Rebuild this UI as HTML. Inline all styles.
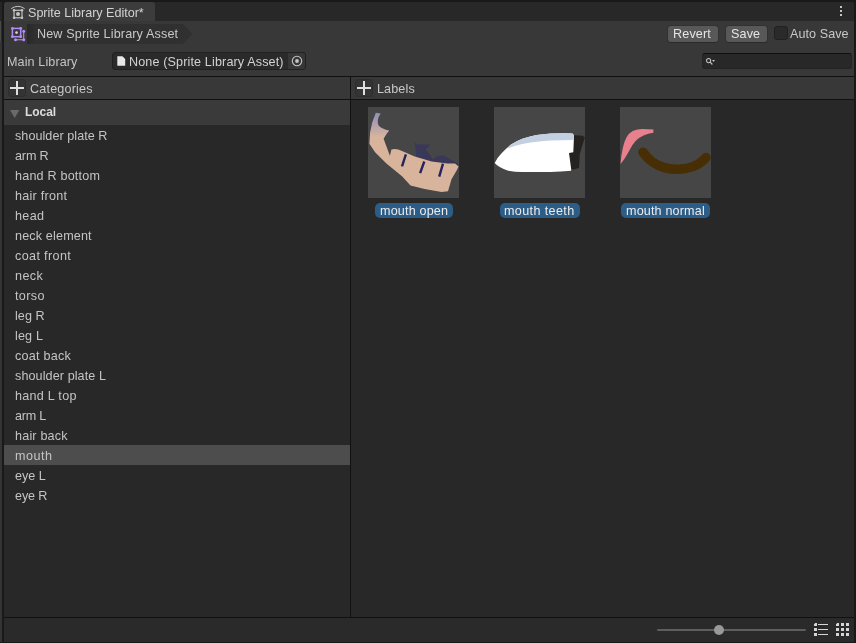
<!DOCTYPE html>
<html>
<head>
<meta charset="utf-8">
<title>Sprite Library Editor</title>
<style>
html,body{margin:0;padding:0;}
body{width:856px;height:643px;overflow:hidden;background:#191919;position:relative;
  font-family:"Liberation Sans",sans-serif;font-size:12.6px;color:#c8c8c8;}
.abs{position:absolute;}
.t{position:absolute;white-space:nowrap;line-height:14px;will-change:transform;}
.hline{position:absolute;height:1px;background:#111;}
.vline{position:absolute;width:1px;background:#111;}
.btn{position:absolute;background:#585858;border:1px solid #313131;border-bottom-color:#2a2a2a;border-radius:4px;box-sizing:border-box;}
.thumb{position:absolute;width:91px;height:91px;background:#464646;top:107px;overflow:hidden;}
.thumb svg{filter:blur(0.45px);display:block;}
.pill{position:absolute;height:15px;top:203px;background:#2c5d87;border-radius:5px;}
</style>
</head>
<body>
<!-- window -->
<div class="abs" style="left:0;top:2px;width:2px;height:19px;background:#262626;"></div>
<div class="abs" style="left:0;top:41px;width:2px;height:601px;background:#343434;"></div>
<div class="abs" style="left:0;top:21px;width:1px;height:20px;background:#484848;"></div>
<div class="abs" style="left:1px;top:21px;width:1px;height:20px;background:#2a2a2a;"></div>
<div class="abs" style="left:4px;top:2px;width:850px;height:640px;background:#383838;border-radius:3px 3px 0 0;"></div>
<div class="abs" style="left:4px;top:2px;width:850px;height:19px;background:#282828;border-radius:3px 3px 0 0;"></div>
<div class="abs" style="left:4px;top:2px;width:151px;height:19px;background:#3c3c3c;border-radius:3px 3px 0 0;"></div>
<!-- tab icon -->
<svg class="abs" style="left:10px;top:4px" width="16" height="16" viewBox="0 0 16 16">
  <path d="M1.2 4.6 Q7.9 0.1 14.6 4.6" fill="none" stroke="#c4c4c4" stroke-width="1"/>
  <rect x="4.05" y="6.3" width="7.95" height="7.5" fill="none" stroke="#c4c4c4" stroke-width="1.15"/>
  <circle cx="4.05" cy="6.3" r="1.25" fill="#c4c4c4"/><circle cx="12" cy="6.3" r="1.25" fill="#c4c4c4"/>
  <circle cx="4.05" cy="13.8" r="1.25" fill="#c4c4c4"/><circle cx="12" cy="13.8" r="1.25" fill="#c4c4c4"/>
  <circle cx="8.02" cy="10.05" r="2" fill="#c4c4c4"/>
</svg>
<div class="t" id="tabt" style="left:28.00px;top:6px;letter-spacing:-0.020px;color:#d2d2d2;">Sprite Library Editor*</div>
<!-- kebab -->
<div class="abs" style="left:840px;top:6px;width:2px;height:2px;background:#c4c4c4;box-shadow:0 4px 0 #c4c4c4,0 8px 0 #c4c4c4;"></div>

<!-- toolbar row 1 -->
<svg class="abs" style="left:10px;top:26px" width="16" height="16" viewBox="0 0 16 16">
  <rect x="2.4" y="2.4" width="8.3" height="8.3" fill="none" stroke="#b08cf2" stroke-width="1.5"/>
  <path d="M13.7 5.2 V13.7 H5.5" fill="none" stroke="#b08cf2" stroke-width="1.1"/>
  <circle cx="2.4" cy="2.4" r="1.4" fill="#b08cf2"/><circle cx="10.7" cy="2.4" r="1.4" fill="#b08cf2"/>
  <circle cx="2.4" cy="10.7" r="1.4" fill="#b08cf2"/><circle cx="10.7" cy="10.7" r="1.4" fill="#b08cf2"/>
  <circle cx="13.7" cy="5.2" r="1.5" fill="#b08cf2"/><circle cx="13.7" cy="13.7" r="1.5" fill="#b08cf2"/><circle cx="5.5" cy="13.7" r="1.5" fill="#b08cf2"/>
  <circle cx="6.55" cy="6.55" r="1.35" fill="#d4d4d4"/>
</svg>
<svg class="abs" style="left:27px;top:24px" width="166" height="20" viewBox="0 0 166 20">
  <defs><linearGradient id="bg" x1="0" x2="1" y1="0" y2="0"><stop offset="0" stop-color="#282828"/><stop offset="0.05" stop-color="#303030"/><stop offset="1" stop-color="#303030"/></linearGradient></defs>
  <path d="M0 0 H156 L165.5 10 L156 20 H0 Z" fill="url(#bg)"/>
</svg>
<div class="t" id="crumb" style="left:37.00px;top:27px;letter-spacing:0.137px;color:#c8c8c8;">New Sprite Library Asset</div>

<div class="btn" style="left:667px;top:25px;width:52px;height:18px;"></div>
<div class="t" id="revert" style="left:673.00px;top:27px;letter-spacing:0.155px;color:#e4e4e4;">Revert</div>
<div class="btn" style="left:725px;top:25px;width:43px;height:18px;"></div>
<div class="t" id="save" style="left:731.00px;top:27px;letter-spacing:0.121px;color:#e4e4e4;">Save</div>
<div class="abs" style="left:774px;top:26px;width:14px;height:14px;background:#2a2a2a;border:1px solid #212121;border-radius:3px;box-sizing:border-box;"></div>
<div class="t" id="autosave" style="left:790.00px;top:27px;letter-spacing:0.055px;color:#c8c8c8;">Auto Save</div>

<!-- row 2 -->
<div class="t" id="mainlib" style="left:7.00px;top:55px;letter-spacing:0.101px;color:#c4c4c4;">Main Library</div>
<div class="abs" style="left:112px;top:52px;width:194px;height:18px;background:#2a2a2a;border:1px solid #212121;border-radius:3px;box-sizing:border-box;"></div>
<div class="abs" style="left:288px;top:53px;width:17px;height:16px;background:#373737;border-radius:0 2px 2px 0;"></div>
<svg class="abs" style="left:117px;top:56px" width="9" height="10" viewBox="0 0 9 10">
  <path d="M0.3 0.2 H5.4 L8.2 3 V9.8 H0.3 Z" fill="#e8e8e8"/>
</svg>
<div class="t" id="none" style="left:129.00px;top:55px;letter-spacing:0.129px;color:#d2d2d2;">None (Sprite Library Asset)</div>
<svg class="abs" style="left:290px;top:54px" width="14" height="14" viewBox="0 0 14 14">
  <circle cx="7" cy="7" r="4.7" fill="none" stroke="#c4c4c4" stroke-width="1.1"/>
  <circle cx="7" cy="7" r="1.9" fill="#c4c4c4"/>
</svg>
<!-- search -->
<div class="abs" style="left:702px;top:53px;width:150px;height:16px;background:#282828;border:1px solid #242424;border-top-color:#0f0f0f;border-radius:3px;box-sizing:border-box;"></div>
<svg class="abs" style="left:705px;top:57px" width="12" height="9" viewBox="0 0 12 9">
  <circle cx="3.6" cy="3.6" r="2.1" fill="none" stroke="#c4c4c4" stroke-width="1.05"/>
  <path d="M5.1 5.1 L7.4 7.5" stroke="#c4c4c4" stroke-width="1.2"/>
  <path d="M7.1 3 H10 L8.55 4.9 Z" fill="#c4c4c4"/>
</svg>

<div class="hline" style="left:4px;top:76px;width:850px;"></div>
<!-- column headers -->
<div class="abs" style="left:8px;top:79px;width:18px;height:18px;background:#343434;border:1px solid #2e2e2e;border-radius:3px;box-sizing:border-box;"></div>
<svg class="abs" style="left:10px;top:81px" width="14" height="14" viewBox="0 0 14 14"><path d="M7 0 V14 M0 7 H14" stroke="#e0e0e0" stroke-width="2"/></svg>
<div class="t" id="cats" style="left:30.00px;top:82px;letter-spacing:0.184px;color:#c8c8c8;">Categories</div>
<div class="abs" style="left:355px;top:79px;width:18px;height:18px;background:#343434;border:1px solid #2e2e2e;border-radius:3px;box-sizing:border-box;"></div>
<svg class="abs" style="left:357px;top:81px" width="14" height="14" viewBox="0 0 14 14"><path d="M7 0 V14 M0 7 H14" stroke="#e0e0e0" stroke-width="2"/></svg>
<div class="t" id="labels" style="left:377.00px;top:82px;letter-spacing:0.117px;color:#c8c8c8;">Labels</div>
<div class="hline" style="left:4px;top:99px;width:850px;"></div>

<!-- panels -->
<div class="abs" style="left:4px;top:100px;width:346px;height:517px;background:#282828;"></div>
<div class="abs" style="left:351px;top:100px;width:503px;height:517px;background:#282828;"></div>
<div class="vline" style="left:350px;top:77px;height:540px;"></div>
<div class="abs" style="left:4px;top:100px;width:346px;height:25px;background:#3a3a3a;"></div>
<svg class="abs" style="left:10px;top:110px" width="10" height="8" viewBox="0 0 10 8"><path d="M0 0 H9.4 L4.7 8 Z" fill="#6a6a6a"/></svg>
<div class="t" id="local" style="left:25.00px;top:105px;letter-spacing:-0.046px;color:#dcdcdc;font-weight:bold;font-size:12px;">Local</div>
<div class="t" id="it0" style="left:15.00px;top:129px;letter-spacing:0.049px;color:#c4c4c4;">shoulder plate R</div>
<div class="t" id="it1" style="left:15.00px;top:149px;letter-spacing:-0.149px;color:#c4c4c4;">arm R</div>
<div class="t" id="it2" style="left:15.00px;top:169px;letter-spacing:0.190px;color:#c4c4c4;">hand R bottom</div>
<div class="t" id="it3" style="left:15.00px;top:189px;letter-spacing:0.259px;color:#c4c4c4;">hair front</div>
<div class="t" id="it4" style="left:15.00px;top:209px;letter-spacing:0.329px;color:#c4c4c4;">head</div>
<div class="t" id="it5" style="left:15.00px;top:229px;letter-spacing:0.153px;color:#c4c4c4;">neck element</div>
<div class="t" id="it6" style="left:15.00px;top:249px;letter-spacing:0.360px;color:#c4c4c4;">coat front</div>
<div class="t" id="it7" style="left:15.00px;top:269px;letter-spacing:0.404px;color:#c4c4c4;">neck</div>
<div class="t" id="it8" style="left:15.00px;top:289px;letter-spacing:0.371px;color:#c4c4c4;">torso</div>
<div class="t" id="it9" style="left:15.00px;top:309px;letter-spacing:0.071px;color:#c4c4c4;">leg R</div>
<div class="t" id="it10" style="left:15.00px;top:329px;letter-spacing:0.147px;color:#c4c4c4;">leg L</div>
<div class="t" id="it11" style="left:15.00px;top:349px;letter-spacing:0.240px;color:#c4c4c4;">coat back</div>
<div class="t" id="it12" style="left:15.00px;top:369px;letter-spacing:0.091px;color:#c4c4c4;">shoulder plate L</div>
<div class="t" id="it13" style="left:15.00px;top:389px;letter-spacing:0.260px;color:#c4c4c4;">hand L top</div>
<div class="t" id="it14" style="left:15.00px;top:409px;letter-spacing:-0.250px;color:#c4c4c4;">arm L</div>
<div class="t" id="it15" style="left:15.00px;top:429px;letter-spacing:0.186px;color:#c4c4c4;">hair back</div>
<div class="abs" style="left:4px;top:445px;width:346px;height:20px;background:#4d4d4d;"></div>
<div class="t" id="it16" style="left:15.00px;top:449px;letter-spacing:0.485px;color:#c4c4c4;">mouth</div>
<div class="t" id="it17" style="left:15.00px;top:469px;letter-spacing:-0.032px;color:#c4c4c4;">eye L</div>
<div class="t" id="it18" style="left:15.00px;top:489px;letter-spacing:-0.124px;color:#c4c4c4;">eye R</div>

<!-- thumbs -->
<div class="thumb" style="left:368px;">
<svg width="91" height="91" viewBox="0 0 91 91">
  <defs><linearGradient id="g1" gradientUnits="userSpaceOnUse" x1="0" y1="6" x2="0" y2="30"><stop offset="0" stop-color="#8f8eb4"/><stop offset="0.35" stop-color="#a89cb0"/><stop offset="1" stop-color="#d8b49c"/></linearGradient></defs>
  <path d="M46.7 35.4 L49.5 37.5 L62.3 37.5 L58 42.5 L65.1 52.4 L69.3 48.8 L76.4 48.8 L84.9 53.8 L90 56.6 L90 62 L48.8 52 Z" fill="#3a3858"/>
  <path d="M7.8 5.7 L12.7 6.4 Q8.2 12.7 10.6 18.4 Q14 22 21.2 23.4 Q18 27 15.6 31.8 L21.9 48.8 L23.4 42.5 Q28.3 41 34 43.9 L46.7 49.5 L63.7 54.5 L79.3 56.6 L87 56.6 L90.6 59.4 L88.5 63.7 L83.5 72.2 L80 84.2 L73.6 84.9 L56.6 82 L42.5 78.5 L34 69.3 L18.4 56.6 L7.1 45.3 L1.4 36.8 L2.1 25.5 L4.2 15.6 Z" fill="url(#g1)"/>
  <path d="M37.9 47.4 L34 59.4 M56.3 54.5 L52.1 66.2 M75 56.6 L71.2 69.6" stroke="#26245c" stroke-width="2.4" fill="none"/>
</svg>
</div>
<div class="thumb" style="left:494px;">
<svg width="91" height="91" viewBox="0 0 91 91">
  <path d="M80 28.2 L88.5 28.8 L90.8 30.4 L85.8 46.7 L85 60.9 L79.3 62.5 L76.5 61.6 L74.5 45.5 L79 45 Z" fill="#262220"/>
  <path d="M0.7 55.9 Q3 51 7.1 46.7 Q11.5 42 17 37.5 Q22 34.3 28.3 31.8 Q35 29.5 42.5 28 Q49.5 27 56.6 26.5 L70.8 26.2 L78.5 26.6 L80 28.3 L79.3 45.3 L75 46 L77.1 61.6 L77.1 63.7 Q67 64.6 56.6 65.1 L28.3 65.1 Q21 64.8 14.2 63.7 Q9.5 62.4 5.7 60.1 Q2.8 58.2 0.7 55.9 Z" fill="#ffffff"/>
  <path d="M13.5 41.5 Q15 39 17 37.5 Q22 34.3 28.3 31.8 Q35 29.5 42.5 28 Q49.5 27 56.6 26.5 L70.8 26.2 L78.5 26.6 L80 28.3 L79.8 33 L56.6 33.5 Q49.5 33.8 42.5 34.7 Q35 35.6 28.3 37.1 Q20 39 13.5 41.5 Z" fill="#c3d0e1"/>
</svg>
</div>
<div class="thumb" style="left:620px;">
<svg width="91" height="91" viewBox="0 0 91 91">
  <path d="M0.5 57 Q1.2 48 2.8 41 Q4 35 6.4 30.4 Q9 26 12.7 24 Q17 22 22.6 21.9 L33.5 22.4 L33.3 25.8 Q28 26.6 24 28.3 Q19 30.5 15.6 34 Q12 38 9.9 42.5 Q7.5 47 5 51 Q3 54 0.5 57 Z" fill="#e8808e"/>
  <path d="M23 45.3 Q27 51 32.5 55 Q38 59 45.3 60.9 Q52 62.6 59.4 62.3 Q67 61.8 73.6 59.4 Q79 57.2 82.8 53.8 L86 50.4" fill="none" stroke="#482e04" stroke-width="9.5" stroke-linecap="round" stroke-linejoin="round"/>
</svg>
</div>
<div class="pill" style="left:375px;width:78px;"></div>
<div class="pill" style="left:500px;width:80px;"></div>
<div class="pill" style="left:621px;width:89px;"></div>
<div class="t" id="p1" style="left:380.00px;top:203.5px;letter-spacing:0.170px;color:#ececec;">mouth open</div>
<div class="t" id="p2" style="left:504.00px;top:203.5px;letter-spacing:0.370px;color:#ececec;">mouth teeth</div>
<div class="t" id="p3" style="left:626.00px;top:203.5px;letter-spacing:0.153px;color:#ececec;">mouth normal</div>

<div class="hline" style="left:4px;top:617px;width:850px;"></div>
<div class="abs" style="left:4px;top:618px;width:850px;height:24px;background:#2a2a2a;"></div>
<!-- footer -->
<div class="abs" style="left:657px;top:629px;width:149px;height:2px;background:#5e5e5e;border-radius:1px;"></div>
<div class="abs" style="left:714px;top:625px;width:10px;height:10px;border-radius:5px;background:#999;"></div>
<svg class="abs" style="left:813px;top:622px" width="16" height="15" viewBox="0 0 16 15" shape-rendering="crispEdges">
  <path d="M1 1 H4 V4 H1 Z M1 6 H4 V9 H1 Z M1 11 H4 V14 H1 Z" fill="#d6d6d6"/>
  <path d="M5 2 H15 V3 H5 Z M5 7 H15 V8 H5 Z M5 12 H15 V13 H5 Z" fill="#d6d6d6"/>
</svg>
<svg class="abs" style="left:835px;top:622px" width="16" height="15" viewBox="0 0 16 15" shape-rendering="crispEdges">
  <path d="M1 1 H4 V4 H1 Z M6 1 H9 V4 H6 Z M11 1 H14 V4 H11 Z M1 6 H4 V9 H1 Z M6 6 H9 V9 H6 Z M11 6 H14 V9 H11 Z M1 11 H4 V14 H1 Z M6 11 H9 V14 H6 Z M11 11 H14 V14 H11 Z" fill="#d6d6d6"/>
</svg>
<div class="abs" style="left:814px;top:623px;width:1px;height:1px;background:#555;"></div>
<div class="abs" style="left:836px;top:623px;width:1px;height:1px;background:#555;"></div>
</body>
</html>
